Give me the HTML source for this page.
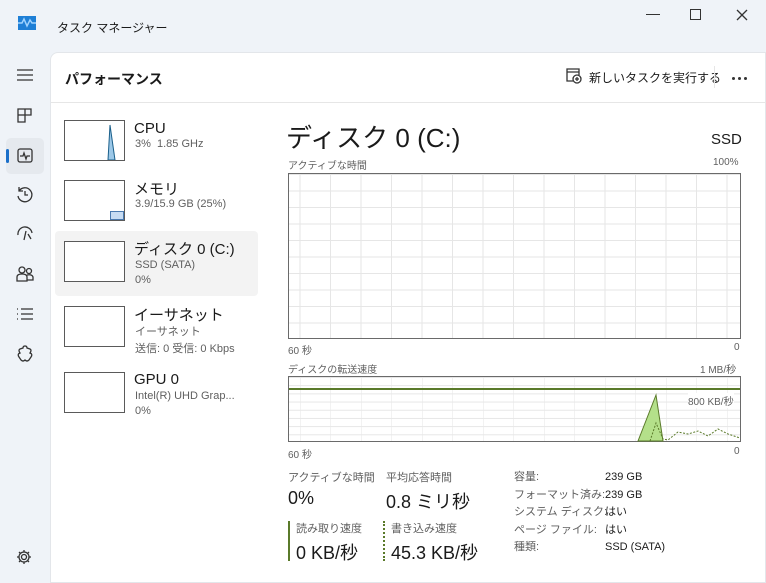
<!DOCTYPE html>
<html><head><meta charset="utf-8"><style>
*{margin:0;padding:0;box-sizing:border-box}
body{width:766px;height:583px;overflow:hidden;background:#eff3f8;font-family:"Liberation Sans","Noto Sans CJK JP",sans-serif;color:#1a1a1a;position:relative}
.a{position:absolute;white-space:nowrap}
.g{color:#5f5f5f}
.panel{position:absolute;left:50px;top:52px;width:716px;height:531px;background:#fff;border-top-left-radius:8px;border:1px solid #e3e6ea}
.thumb{position:absolute;left:64px;width:61px;height:41px;border:1px solid #5a5a5a;background:#fff}
.grid{position:absolute;border:1px solid #6a6a6a;background-color:#fff;
background-image:linear-gradient(#e6e6e6 1px,transparent 1px),linear-gradient(90deg,#e6e6e6 1px,transparent 1px)}
svg.i{position:absolute;fill:none;stroke:#333;stroke-width:1.3}
</style></head><body>
<svg class="a" style="left:18px;top:16px" width="18" height="14"><rect x="0" y="0" width="18" height="14" fill="#1e7fd6"/><path d="M0 7 L4 7 L6 3 L9 10 L12 4 L14 7 L18 7" stroke="#9fd3ff" stroke-width="1.5" fill="none"/></svg>
<div class="a" style="left:57px;top:19px;font-size:12px">タスク マネージャー</div>
<div class="a" style="left:646px;top:14px;width:14px;height:1px;background:#333"></div>
<div class="a" style="left:690px;top:9px;width:11px;height:11px;border:1.2px solid #333"></div>
<svg class="i" style="left:736px;top:9px" width="12" height="12"><path d="M1 1 L11 11 M11 1 L1 11"/></svg>
<!-- sidebar icons -->
<svg class="i" style="left:16px;top:68px" width="18" height="14"><path d="M1 2H17M1 7H17M1 12H17"/></svg>
<svg class="i" style="left:17px;top:108px" width="16" height="16"><path d="M1 1H8V14H1ZM8 1H14V7H8"/><path d="M1 7H8"/></svg>
<div class="a" style="left:6px;top:138px;width:38px;height:36px;background:#e5e9ee;border-radius:5px"></div>
<div class="a" style="left:6px;top:149px;width:3px;height:14px;background:#1a6fc9;border-radius:2px"></div>
<svg class="i" style="left:17px;top:148px" width="16" height="16"><rect x="1" y="1" width="14" height="13" rx="2"/><path d="M3 8H6L7 5L9 11L10 8H13"/></svg>
<svg class="i" style="left:16px;top:186px" width="18" height="18"><path d="M3 5A7 7 0 1 1 2 10M3 1V5H7M9 5V9H12"/></svg>
<svg class="i" style="left:16px;top:226px" width="18" height="16"><path d="M2 9A7 7 0 0 1 16 7M8 14L10 5M12 8L15 13"/></svg>
<svg class="i" style="left:16px;top:265px" width="18" height="18"><circle cx="6" cy="5" r="3"/><circle cx="13" cy="6" r="2.5"/><path d="M1 16V12Q1 9 6 9Q11 9 11 12V16ZM11 10Q16 9 17 12V15H11"/></svg>
<svg class="i" style="left:16px;top:307px" width="18" height="14"><path d="M5 2H17M5 7H17M5 12H17M1 2H2M1 7H2M1 12H2"/></svg>
<svg class="i" style="left:17px;top:345px" width="17" height="18"><path d="M6 3Q6 1 8 1Q10 1 10 3L13 4Q15 5 13 8Q16 9 14 12L12 15Q10 17 8 15Q6 17 4 15L2 12Q0 9 3 8Q1 5 3 4Z"/></svg>
<svg class="i" style="left:16px;top:549px" width="16" height="16"><circle cx="8" cy="8" r="2.5"/><path d="M8 1V3M8 13V15M1 8H3M13 8H15M3 3L4.5 4.5M11.5 11.5L13 13M3 13L4.5 11.5M11.5 4.5L13 3"/><circle cx="8" cy="8" r="5"/></svg>
<div class="panel"></div>
<div class="a" style="left:65px;top:69px;font-size:14px;font-weight:bold">パフォーマンス</div>
<svg class="i" style="left:566px;top:68px" width="16" height="16"><path d="M7 13H1V1H13V7M1 4H13"/><circle cx="11" cy="11" r="4"/><path d="M11 9V13M9 11H13"/></svg>
<div class="a" style="left:589px;top:69px;font-size:12px">新しいタスクを実行する</div>
<div class="a" style="left:714px;top:66px;width:1px;height:22px;background:#e6e6e6"></div>
<div class="a" style="left:732px;top:77px;width:3px;height:3px;background:#333;border-radius:50%;box-shadow:6px 0 #333,12px 0 #333"></div>
<div class="a" style="left:51px;top:102px;width:715px;height:1px;background:#e6e6e6"></div>
<!-- left list -->
<div class="a" style="left:55px;top:231px;width:203px;height:65px;background:#f3f3f3;border-radius:4px"></div>
<div class="thumb" style="top:120px"><svg width="59" height="39" style="position:absolute;left:0;top:0"><path d="M43 39 L45 4 L50 39Z" fill="#9cc8e8" stroke="#1a5f8a"/></svg></div>
<div class="a" style="left:134px;top:120px;font-size:15px">CPU</div>
<div class="a g" style="left:135px;top:138px;font-size:11px">3%&nbsp; 1.85 GHz</div>
<div class="thumb" style="top:180px"><div class="a" style="left:45px;top:30px;width:14px;height:9px;background:#c7dcf3;border:1px solid #4a7ab0"></div></div>
<div class="a" style="left:134px;top:178px;font-size:15px">メモリ</div>
<div class="a g" style="left:135px;top:198px;font-size:11px">3.9/15.9 GB (25%)</div>
<div class="thumb" style="top:241px"></div>
<div class="a" style="left:134px;top:238px;font-size:15px">ディスク 0 (C:)</div>
<div class="a g" style="left:135px;top:259px;font-size:11px">SSD (SATA)</div>
<div class="a g" style="left:135px;top:274px;font-size:11px">0%</div>
<div class="thumb" style="top:306px"></div>
<div class="a" style="left:134px;top:304px;font-size:15px">イーサネット</div>
<div class="a g" style="left:135px;top:323px;font-size:11px">イーサネット</div>
<div class="a g" style="left:135px;top:340px;font-size:11px">送信: 0 受信: 0 Kbps</div>
<div class="thumb" style="top:372px"></div>
<div class="a" style="left:134px;top:371px;font-size:15px">GPU 0</div>
<div class="a g" style="left:135px;top:390px;font-size:11px">Intel(R) UHD Grap...</div>
<div class="a g" style="left:135px;top:405px;font-size:11px">0%</div>
<!-- right -->
<div class="a" style="left:286px;top:118px;font-size:26px">ディスク 0 (C:)</div>
<div class="a" style="left:711px;top:131px;font-size:15px">SSD</div>
<div class="a g" style="left:288px;top:157px;font-size:10px">アクティブな時間</div>
<div class="a g" style="left:713px;top:157px;font-size:10px">100%</div>
<div class="grid" style="left:288px;top:173px;width:453px;height:166px;background-size:30.5px 16.5px;background-position:-20px 0"></div>
<div class="a g" style="left:288px;top:342px;font-size:10px">60 秒</div>
<div class="a g" style="left:734px;top:342px;font-size:10px">0</div>
<div class="a g" style="left:288px;top:361px;font-size:10px">ディスクの転送速度</div>
<div class="a g" style="left:700px;top:361px;font-size:10px">1 MB/秒</div>
<div class="grid" style="left:288px;top:376px;width:453px;height:66px;background-size:30.5px 8.2px;background-position:-20px 0"></div>
<div class="a" style="left:289px;top:388px;width:451px;height:1.5px;background:#5a7a2a"></div>
<div class="a g" style="left:688px;top:393px;font-size:10px;background:#fff">800 KB/秒</div>
<svg class="a" style="left:288px;top:376px" width="453" height="66"><path d="M350 65 L368 19 L375 65Z" fill="#b4e08a" stroke="#5a7a2a"/><path d="M362 65 L368 47 L375 63 L380 64 L390 56 L400 58 L410 55 L420 60 L430 53 L440 58 L452 62" fill="none" stroke="#5a7a2a" stroke-dasharray="2,1.5"/></svg>
<div class="a g" style="left:288px;top:446px;font-size:10px">60 秒</div>
<div class="a g" style="left:734px;top:446px;font-size:10px">0</div>
<div class="a g" style="left:288px;top:469px;font-size:11px">アクティブな時間</div>
<div class="a" style="left:288px;top:488px;font-size:18px">0%</div>
<div class="a g" style="left:386px;top:469px;font-size:11px">平均応答時間</div>
<div class="a" style="left:386px;top:488px;font-size:18px">0.8 ミリ秒</div>
<div class="a" style="left:288px;top:521px;width:2px;height:40px;background:#5a7a2a"></div>
<div class="a g" style="left:296px;top:520px;font-size:11px">読み取り速度</div>
<div class="a" style="left:296px;top:539px;font-size:18px">0 KB/秒</div>
<div class="a" style="left:383px;top:521px;width:0;height:40px;border-left:2px dotted #5a7a2a"></div>
<div class="a g" style="left:391px;top:520px;font-size:11px">書き込み速度</div>
<div class="a" style="left:391px;top:539px;font-size:18px">45.3 KB/秒</div>
<div class="a g" style="left:514px;top:469px;font-size:11px;line-height:17.6px">容量:<br>フォーマット済み:<br>システム ディスク:<br>ページ ファイル:<br>種類:</div>
<div class="a" style="left:605px;top:469px;font-size:11px;line-height:17.6px">239 GB<br>239 GB<br>はい<br>はい<br>SSD (SATA)</div>
</body></html>
